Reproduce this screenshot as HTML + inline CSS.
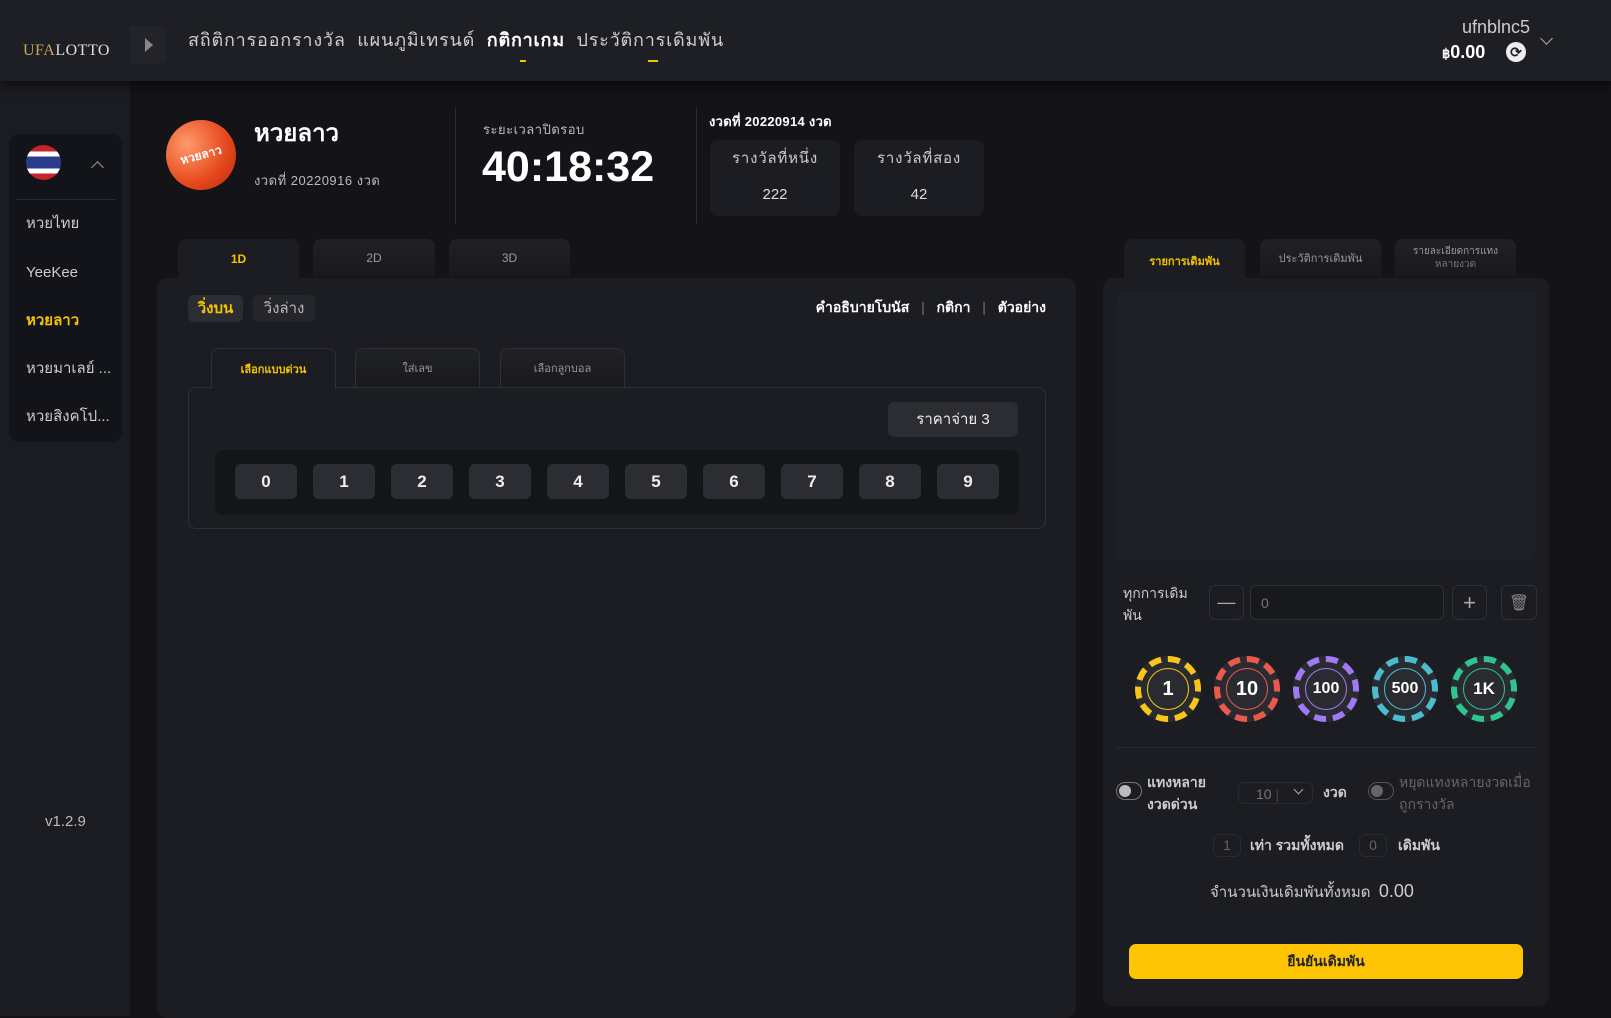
<!DOCTYPE html>
<html><head><meta charset="utf-8">
<style>
*{box-sizing:border-box;margin:0;padding:0}
body{width:1611px;height:1016px;background:#131318;font-family:"Liberation Sans","Noto Sans CJK SC",sans-serif;color:#e6e6e6;position:relative;overflow:hidden}
.a{position:absolute}
.t{white-space:nowrap;line-height:1}
.hdr{left:0;top:0;width:1611px;height:81px;background:#1e1f24;box-shadow:0 4px 10px rgba(0,0,0,.5)}
.side{left:0;top:0;width:130px;height:1016px;background:#1b1c21}
.btn{background:#2c2d33;border-radius:6px;display:flex;align-items:center;justify-content:center}
.tab{background:linear-gradient(#202126,#18191d);border-radius:8px 8px 0 0;display:flex;align-items:center;justify-content:center;font-size:12px;color:#9a9a9a}
.chip{width:66px;height:66px;border-radius:50%;background:#2a2b31;display:flex;align-items:center;justify-content:center;font-weight:bold;color:#fff}
</style></head><body>
<div class="a side"></div>
<div class="a hdr"></div>
<div class="a t" style="left:23px;top:43px;font-family:'Liberation Serif',serif;font-size:16px;color:#ddd;letter-spacing:.5px"><span style="color:#c9a652">UFA</span>LOTTO</div>
<div class="a" style="left:130px;top:26px;width:36px;height:38px;background:#23242a;border-radius:0 6px 6px 0"></div>
<div class="a" style="left:145px;top:38px;width:0;height:0;border-left:8px solid #888;border-top:7px solid transparent;border-bottom:7px solid transparent"></div>
<div class="a t" style="left:188px;top:31px;font-size:18px;color:#cfcfcf;letter-spacing:0.8px">สถิติการออกรางวัล&nbsp; แผนภูมิเทรนด์&nbsp; <b style="color:#fff">กติกาเกม</b>&nbsp; ประวัติการเดิมพัน</div>
<div class="a" style="left:520px;top:60px;width:6px;height:2px;background:#f5c400"></div>
<div class="a" style="left:648px;top:60px;width:10px;height:2px;background:#f5c400"></div>
<div class="a t" style="right:81px;top:18px;font-size:18px;color:#ccc">ufnblnc5</div>
<div class="a t" style="left:1442px;top:43px;font-size:18px;font-weight:bold;color:#fff"><span style="font-size:13px">฿</span>0.00</div>
<div class="a" style="left:1506px;top:42px;width:20px;height:20px;border-radius:50%;background:#eee;color:#1e1f24;font-size:14px;line-height:20px;text-align:center;font-weight:bold">⟳</div>
<div class="a" style="left:1542px;top:34px;width:9px;height:9px;border-right:1.5px solid #aaa;border-bottom:1.5px solid #aaa;transform:rotate(45deg)"></div>

<div class="a" style="left:9px;top:134px;width:113px;height:308px;background:#131419;border-radius:10px"></div>
<div class="a" style="left:26px;top:145px;width:35px;height:35px;border-radius:50%;background:linear-gradient(#c8232c 0 18%,#fff 18% 33%,#2b3c8f 33% 67%,#fff 67% 82%,#c8232c 82%)"></div>
<div class="a" style="left:93px;top:163px;width:9px;height:9px;border-left:1.5px solid #999;border-top:1.5px solid #999;transform:rotate(45deg)"></div>
<div class="a" style="left:16px;top:199px;width:100px;height:1px;background:#2a2b30"></div>
<div class="a t" style="left:26px;top:216px;font-size:15px;color:#ccc">หวยไทย</div>
<div class="a t" style="left:26px;top:265px;font-size:15px;color:#ccc">YeeKee</div>
<div class="a t" style="left:26px;top:313px;font-size:15px;color:#f5c400;font-weight:bold">หวยลาว</div>
<div class="a t" style="left:26px;top:361px;font-size:15px;color:#ccc">หวยมาเลย์ ...</div>
<div class="a t" style="left:26px;top:409px;font-size:15px;color:#ccc">หวยสิงคโป...</div>
<div class="a t" style="left:45px;top:814px;font-size:15px;color:#bbb">v1.2.9</div>

<div class="a" style="left:166px;top:120px;width:70px;height:70px;border-radius:50%;background:radial-gradient(circle at 35% 30%,#ff9a6a,#e6471c 60%,#b52a0c);display:flex;align-items:center;justify-content:center;color:#fff;font-size:12px;font-weight:bold;transform:rotate(-15deg)">หวยลาว</div>
<div class="a t" style="left:254px;top:122px;font-size:24px;font-weight:bold;color:#fff">หวยลาว</div>
<div class="a t" style="left:254px;top:174px;font-size:13px;color:#bbb;letter-spacing:.5px">งวดที่ 20220916 งวด</div>
<div class="a" style="left:455px;top:108px;width:1px;height:116px;background:#2c2d33"></div>
<div class="a t" style="left:483px;top:123px;font-size:13px;color:#bbb;letter-spacing:.5px">ระยะเวลาปิดรอบ</div>
<div class="a t" style="left:482px;top:146px;font-size:43px;font-weight:bold;color:#fff">40:18:32</div>
<div class="a" style="left:696px;top:108px;width:1px;height:116px;background:#2c2d33"></div>
<div class="a t" style="left:709px;top:115px;font-size:13px;font-weight:bold;color:#fff;letter-spacing:.3px">งวดที่ 20220914 งวด</div>
<div class="a" style="left:710px;top:140px;width:130px;height:76px;background:#1c1d22;border-radius:8px"></div>
<div class="a" style="left:854px;top:140px;width:130px;height:76px;background:#1c1d22;border-radius:8px"></div>
<div class="a t" style="left:710px;top:151px;width:130px;text-align:center;font-size:15px;color:#ccc;letter-spacing:.8px">รางวัลที่หนึ่ง</div>
<div class="a t" style="left:854px;top:151px;width:130px;text-align:center;font-size:15px;color:#ccc;letter-spacing:.8px">รางวัลที่สอง</div>
<div class="a t" style="left:710px;top:187px;width:130px;text-align:center;font-size:15px;color:#ddd">222</div>
<div class="a t" style="left:854px;top:187px;width:130px;text-align:center;font-size:15px;color:#ddd">42</div>

<div class="a tab" style="left:178px;top:239px;width:121px;height:42px;background:#1c1d22;color:#f5c400;font-weight:bold;align-items:flex-start;padding-top:13px">1D</div>
<div class="a tab" style="left:313px;top:239px;width:122px;height:38px">2D</div>
<div class="a tab" style="left:449px;top:239px;width:121px;height:38px">3D</div>
<div class="a" style="left:157px;top:278px;width:919px;height:740px;background:#1c1d22;border-radius:10px"></div>
<div class="a t" style="left:188px;top:295px;width:55px;height:27px;background:#2c2d33;border-radius:6px;color:#f5c400;font-size:15px;font-weight:bold;text-align:center;line-height:27px">วิ่งบน</div>
<div class="a t" style="left:253px;top:295px;width:62px;height:27px;background:#25262b;border-radius:6px;color:#bbb;font-size:15px;text-align:center;line-height:27px">วิ่งล่าง</div>
<div class="a t" style="right:565px;top:300px;font-size:14px;font-weight:bold;color:#fff">คำอธิบายโบนัส&nbsp;&nbsp; <span style="color:#555">|</span>&nbsp;&nbsp; กติกา&nbsp;&nbsp; <span style="color:#555">|</span>&nbsp;&nbsp; ตัวอย่าง</div>
<div class="a" style="left:188px;top:387px;width:858px;height:142px;border:1.5px solid #2f3036;border-radius:8px"></div>
<div class="a tab" style="left:211px;top:348px;width:125px;height:41px;border:1.5px solid #2f3036;border-bottom:none;background:#1c1d22;color:#f5c400;font-size:11px;font-weight:bold">เลือกแบบด่วน</div>
<div class="a tab" style="left:355px;top:348px;width:125px;height:39px;border:1.5px solid #2f3036;border-bottom:none;font-size:11px">ใส่เลข</div>
<div class="a tab" style="left:500px;top:348px;width:125px;height:39px;border:1.5px solid #2f3036;border-bottom:none;font-size:11px">เลือกลูกบอล</div>
<div class="a btn t" style="left:888px;top:402px;width:130px;height:35px;font-size:15px;color:#eee">ราคาจ่าย 3</div>
<div class="a" style="left:215px;top:450px;width:804px;height:65px;background:#141519;border-radius:8px"></div>
<div class="a" style="left:235px;top:464px;display:flex;gap:16px">
<div class="btn t" style="width:62px;height:35px;font-size:17px;font-weight:bold;color:#eee">0</div><div class="btn t" style="width:62px;height:35px;font-size:17px;font-weight:bold;color:#eee">1</div><div class="btn t" style="width:62px;height:35px;font-size:17px;font-weight:bold;color:#eee">2</div><div class="btn t" style="width:62px;height:35px;font-size:17px;font-weight:bold;color:#eee">3</div><div class="btn t" style="width:62px;height:35px;font-size:17px;font-weight:bold;color:#eee">4</div><div class="btn t" style="width:62px;height:35px;font-size:17px;font-weight:bold;color:#eee">5</div><div class="btn t" style="width:62px;height:35px;font-size:17px;font-weight:bold;color:#eee">6</div><div class="btn t" style="width:62px;height:35px;font-size:17px;font-weight:bold;color:#eee">7</div><div class="btn t" style="width:62px;height:35px;font-size:17px;font-weight:bold;color:#eee">8</div><div class="btn t" style="width:62px;height:35px;font-size:17px;font-weight:bold;color:#eee">9</div>
</div>

<div class="a tab" style="left:1124px;top:239px;width:121px;height:42px;background:#1c1d22;color:#f5c400;font-weight:bold;font-size:11px;align-items:flex-start;padding-top:13px">รายการเดิมพัน</div>
<div class="a tab" style="left:1260px;top:239px;width:121px;height:38px;font-size:11px">ประวัติการเดิมพัน</div>
<div class="a tab" style="left:1395px;top:239px;width:121px;height:38px;font-size:10px;flex-direction:column;line-height:1.3">รายละเอียดการแทง<span style="color:#777">หลายงวด</span></div>
<div class="a" style="left:1103px;top:278px;width:446px;height:728px;background:#1c1d22;border-radius:10px"></div>
<div class="a" style="left:1117px;top:293px;width:419px;height:267px;background:#1f2025;border-radius:8px"></div>
<div class="a" style="left:1123px;top:582px;font-size:14px;color:#ccc;line-height:22px">ทุกการเดิม<br>พัน</div>
<div class="a btn" style="left:1209px;top:585px;width:35px;height:35px;background:#1c1d22;border:1px solid #2f3036;color:#aaa;font-size:18px">—</div>
<div class="a" style="left:1250px;top:585px;width:194px;height:35px;border:1px solid #2f3036;border-radius:6px;background:#18191d;color:#777;font-size:14px;padding:9px 10px">0</div>
<div class="a btn" style="left:1452px;top:585px;width:35px;height:35px;background:#1c1d22;border:1px solid #2f3036;color:#aaa;font-size:22px">+</div>
<div class="a btn" style="left:1501px;top:585px;width:36px;height:35px;background:#1c1d22;border:1px solid #2f3036;color:#888;font-size:16px">🗑</div>
<div class="a chip" style="left:1135px;top:656px;border:6px dashed #f7c51b;font-size:20px"><div style="width:42px;height:42px;border-radius:50%;border:1px solid #f7c51b;display:flex;align-items:center;justify-content:center">1</div></div>
<div class="a chip" style="left:1214px;top:656px;border:6px dashed #ea5a4b;font-size:20px"><div style="width:42px;height:42px;border-radius:50%;border:1px solid #ea5a4b;display:flex;align-items:center;justify-content:center">10</div></div>
<div class="a chip" style="left:1293px;top:656px;border:6px dashed #a07af2;font-size:16px"><div style="width:42px;height:42px;border-radius:50%;border:1px solid #a07af2;display:flex;align-items:center;justify-content:center">100</div></div>
<div class="a chip" style="left:1372px;top:656px;border:6px dashed #4bbcd0;font-size:16px"><div style="width:42px;height:42px;border-radius:50%;border:1px solid #4bbcd0;display:flex;align-items:center;justify-content:center">500</div></div>
<div class="a chip" style="left:1451px;top:656px;border:6px dashed #2fc48c;font-size:17px"><div style="width:42px;height:42px;border-radius:50%;border:1px solid #2fc48c;display:flex;align-items:center;justify-content:center">1K</div></div>
<div class="a" style="left:1117px;top:747px;width:419px;height:1px;background:#2a2b30"></div>
<div class="a" style="left:1116px;top:782px;width:26px;height:18px;border-radius:9px;border:1.5px solid #777;background:#1c1d22"><div style="width:12px;height:12px;border-radius:50%;background:#bbb;margin:1.5px"></div></div>
<div class="a" style="left:1147px;top:771px;font-size:14px;font-weight:bold;color:#ccc;line-height:22px">แทงหลาย<br>งวดด่วน</div>
<div class="a" style="left:1238px;top:782px;width:75px;height:22px;border:1px solid #2a2b30;border-radius:6px;font-size:14px;color:#777;padding:3px 0 0 17px">10 <span style="color:#444">|</span></div>
<div class="a" style="left:1295px;top:786px;width:7px;height:7px;border-right:1.5px solid #aaa;border-bottom:1.5px solid #aaa;transform:rotate(45deg)"></div>
<div class="a t" style="left:1323px;top:785px;font-size:14px;font-weight:bold;color:#ccc">งวด</div>
<div class="a" style="left:1368px;top:782px;width:26px;height:18px;border-radius:9px;border:1.5px solid #555;background:#1c1d22"><div style="width:12px;height:12px;border-radius:50%;background:#666;margin:1.5px"></div></div>
<div class="a" style="left:1399px;top:771px;font-size:14px;color:#666;line-height:22px">หยุดแทงหลายงวดเมื่อ<br>ถูกรางวัล</div>
<div class="a t" style="left:1213px;top:834px;width:28px;height:23px;border:1px solid #2a2b30;border-radius:6px;color:#666;font-size:14px;text-align:center;line-height:21px">1</div>
<div class="a t" style="left:1250px;top:838px;font-size:14px;font-weight:bold;color:#ccc">เท่า รวมทั้งหมด</div>
<div class="a t" style="left:1359px;top:834px;width:28px;height:23px;border:1px solid #2a2b30;border-radius:6px;color:#666;font-size:14px;text-align:center;line-height:21px">0</div>
<div class="a t" style="left:1398px;top:838px;font-size:14px;font-weight:bold;color:#ccc">เดิมพัน</div>
<div class="a t" style="left:1210px;top:882px;font-size:15px;color:#ccc">จำนวนเงินเดิมพันทั้งหมด&nbsp; <span style="font-size:18px">0.00</span></div>
<div class="a t" style="left:1129px;top:944px;width:394px;height:35px;background:#fdc406;border-radius:7px;color:#222;font-size:14px;font-weight:bold;text-align:center;line-height:35px">ยืนยันเดิมพัน</div>
</body></html>
